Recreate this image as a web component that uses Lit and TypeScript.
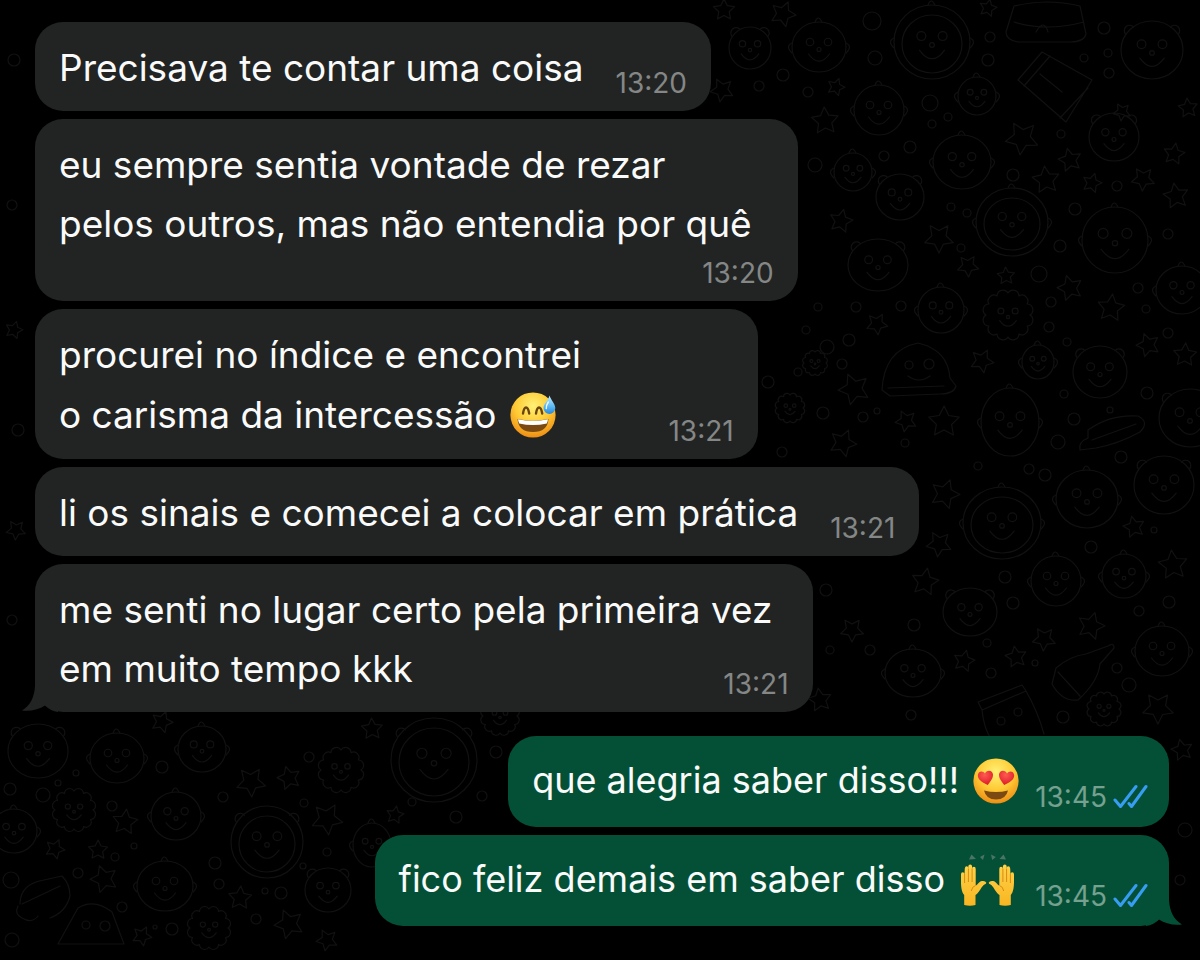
import { LitElement, html, svg, css, nothing } from "lit";
import { customElement, property } from "lit/decorators.js";
import { classMap } from "lit/directives/class-map.js";

type EmojiName = "sweat" | "love" | "hands";

interface Message {
  lines: string[];
  time: string;
  emoji?: EmojiName;
  sent?: boolean;
  tail?: boolean;
  below?: boolean;
  room?: "wide" | "tight";
}

const messages: Message[] = [
  { lines: ["Precisava te contar uma coisa"], time: "13:20" },
  {
    lines: ["eu sempre sentia vontade de rezar", "pelos outros, mas não entendia por quê"],
    time: "13:20",
    below: true,
  },
  {
    lines: ["procurei no índice e encontrei", "o carisma da intercessão"],
    time: "13:21",
    emoji: "sweat",
    room: "wide",
  },
  { lines: ["li os sinais e comecei a colocar em prática"], time: "13:21" },
  {
    lines: ["me senti no lugar certo pela primeira vez", "em muito tempo kkk"],
    time: "13:21",
    tail: true,
  },
  { lines: ["que alegria saber disso!!!"], time: "13:45", emoji: "love", sent: true, room: "tight" },
  {
    lines: ["fico feliz demais em saber disso"],
    time: "13:45",
    emoji: "hands",
    sent: true,
    tail: true,
    room: "tight",
  },
];

/* Doodles of the wallpaper: centre x, centre y, horizontal and vertical radius. */
const faces: number[][] = [
  [750, 48, 21, 21], [819, 47, 27, 25], [932, 42, 38, 37], [1152, 50, 31, 29],
  [879, 110, 25, 25], [977, 96, 19, 19], [1114, 137, 25, 24], [962, 162, 29, 27],
  [853, 172, 19, 19], [900, 197, 24, 23], [1012, 222, 36, 34], [1115, 240, 33, 33],
  [878, 265, 30, 26], [941, 310, 23, 23], [1038, 362, 16, 17], [1100, 372, 27, 26],
  [1010, 422, 29, 34], [1182, 290, 26, 24], [1190, 418, 31, 29], [1002, 523, 39, 36],
  [1087, 499, 31, 29], [1164, 485, 30, 29], [1056, 581, 25, 25], [1124, 576, 22, 22],
  [970, 612, 27, 24], [913, 673, 28, 24], [1162, 651, 27, 25], [38, 751, 30, 27],
  [117, 758, 27, 25], [202, 749, 24, 23], [434, 760, 43, 42], [14, 831, 23, 22],
  [176, 816, 25, 24], [267, 842, 36, 36], [372, 845, 19, 22], [165, 886, 28, 25],
  [328, 890, 23, 22],
];
const fluffy: number[][] = [
  [1008, 315, 22], [1104, 709, 15], [341, 770, 20], [74, 810, 19], [209, 928, 19],
  [500, 716, 17], [815, 363, 11], [790, 408, 13],
];
const stars: number[][] = [
  [724, 10, 11], [783, 14, 13], [722, 90, 12], [825, 121, 14], [836, 87, 9], [1022, 138, 17],
  [1046, 180, 14], [1092, 183, 10], [1143, 179, 12], [1176, 196, 13], [841, 221, 12],
  [939, 238, 15], [1070, 160, 12], [1174, 154, 11], [968, 266, 11], [1070, 288, 13],
  [1111, 308, 14], [877, 324, 11], [1148, 345, 12], [1185, 355, 12], [982, 361, 12],
  [854, 389, 16], [944, 422, 16], [843, 443, 14], [906, 421, 11], [1006, 276, 9],
  [945, 494, 15], [939, 544, 13], [1173, 565, 15], [1091, 626, 14], [1044, 639, 12],
  [1016, 657, 11], [964, 661, 11], [1158, 708, 16], [1134, 527, 11], [925, 582, 14],
  [251, 782, 15], [289, 778, 12], [125, 822, 13], [327, 819, 16], [104, 879, 14],
  [240, 898, 12], [142, 936, 10], [289, 924, 15], [98, 850, 10], [55, 849, 10],
  [327, 940, 11], [372, 729, 11], [162, 722, 11], [1122, 112, 9], [1188, 108, 10],
  [14, 330, 9], [16, 530, 10], [820, 700, 12], [988, 8, 9], [852, 630, 12],
  [1182, 750, 11], [395, 815, 9],
];
const dots: number[][] = [
  [872, 21, 9], [875, 58, 7], [990, 37, 5], [988, 60, 6], [930, 103, 8], [932, 124, 4],
  [948, 117, 4], [910, 147, 6], [884, 156, 5], [815, 165, 7], [1104, 28, 6], [1108, 53, 4],
  [1109, 73, 5], [1084, 58, 4], [1061, 134, 4], [1013, 175, 6], [1117, 186, 5], [951, 207, 4],
  [967, 213, 4], [1075, 209, 6], [759, 86, 5], [783, 75, 6], [808, 92, 5], [1168, 234, 5],
  [1039, 274, 8], [1060, 246, 6], [961, 248, 4], [1051, 302, 5], [1146, 309, 4], [1049, 327, 5],
  [1138, 288, 5], [1168, 333, 5], [901, 306, 5], [856, 307, 5], [818, 307, 4], [1067, 342, 4],
  [823, 413, 6], [863, 417, 5], [877, 411, 3], [905, 443, 4], [1074, 419, 6], [1058, 442, 7],
  [1121, 457, 6], [1064, 394, 4], [1110, 410, 3], [1147, 393, 6], [978, 466, 4], [1029, 469, 5],
  [1045, 475, 6], [1091, 547, 6], [1154, 530, 3], [1005, 577, 6], [1169, 602, 6], [1139, 611, 5],
  [1013, 603, 6], [914, 625, 6], [991, 673, 5], [911, 715, 5], [1117, 668, 5], [1129, 685, 7],
  [1063, 717, 6], [1035, 663, 3], [987, 643, 4], [162, 767, 6], [76, 773, 3], [58, 783, 3],
  [10, 789, 6], [43, 795, 7], [112, 806, 5], [309, 757, 5], [304, 803, 4], [223, 797, 5],
  [134, 846, 3], [115, 857, 4], [78, 873, 5], [11, 880, 8], [215, 863, 6], [219, 884, 5],
  [281, 893, 6], [265, 891, 3], [256, 919, 5], [172, 929, 6], [155, 927, 2], [122, 907, 5],
  [12, 940, 7], [327, 852, 4], [303, 866, 3], [14, 60, 6], [12, 205, 5], [18, 430, 6],
  [12, 620, 5], [806, 330, 4], [768, 382, 6], [842, 364, 5], [849, 340, 6], [827, 347, 7],
  [798, 372, 4], [782, 452, 5], [826, 590, 6], [870, 650, 5], [830, 650, 4], [1185, 830, 7],
  [1180, 880, 5], [412, 802, 4], [482, 796, 5], [496, 752, 6], [456, 817, 6],
];

function starPath(x: number, y: number, r: number, turn: number): string {
  const points: string[] = [];
  for (let i = 0; i < 10; i++) {
    const a = (Math.PI * i) / 5 + turn;
    const d = i % 2 ? r * 0.5 : r;
    points.push(`${(x + d * Math.sin(a)).toFixed(1)} ${(y - d * Math.cos(a)).toFixed(1)}`);
  }
  return `M${points.join("L")}Z`;
}

function fluffyPath(x: number, y: number, r: number): string {
  const n = 12;
  let d = "";
  for (let i = 0; i <= n; i++) {
    const a = (2 * Math.PI * i) / n;
    const px = (x + r * Math.cos(a)).toFixed(1);
    const py = (y + r * Math.sin(a)).toFixed(1);
    d += i ? `A${r * 0.27} ${r * 0.27} 0 0 1 ${px} ${py}` : `M${px} ${py}`;
  }
  return d + "Z";
}

const smile = (x: number, y: number, r: number) => svg`
  <circle cx=${x - r * 0.36} cy=${y - r * 0.2} r=${r * 0.15}></circle>
  <circle cx=${x + r * 0.36} cy=${y - r * 0.2} r=${r * 0.15}></circle>
  <circle cx=${x} cy=${y + r * 0.1} r=${r * 0.08}></circle>
  <path d="M${x - r * 0.42} ${y + r * 0.28}Q${x} ${y + r * 0.85} ${x + r * 0.42} ${y + r * 0.28}"></path>`;

@customElement("chat-wallpaper")
class ChatWallpaper extends LitElement {
  static styles = css`
    :host {
      display: block;
      overflow: hidden;
    }
    .art {
      display: block;
      width: 100%;
      height: 100%;
      fill: none;
      stroke: #101110;
      stroke-width: 1.2;
      stroke-linejoin: round;
      stroke-linecap: round;
    }
  `;

  render() {
    return html`<svg class="art" viewBox="0 0 1200 960" preserveAspectRatio="xMidYMid slice" aria-hidden="true">
      ${faces.map(
        ([x, y, rx, ry], i) => svg`
        <ellipse cx=${x} cy=${y} rx=${rx} ry=${ry}></ellipse>
        ${rx > 35 ? svg`<ellipse cx=${x} cy=${y + 2} rx=${rx - 8} ry=${ry - 8}></ellipse>` : nothing}
        ${i % 3 === 0
          ? svg`<path d="M${x - rx * 0.85} ${y - ry * 0.55}a5 5 0 1 1 8 -7M${x + rx * 0.85} ${y - ry * 0.55}a5 5 0 1 0 -8 -7"></path>`
          : svg`<path d="M${x - rx} ${y - 4}q-7 3 0 10M${x + rx} ${y - 4}q7 3 0 10M${x - 4} ${y - ry}q3 -8 7 0"></path>`}
        ${smile(x, y, Math.min(rx, ry) * (rx > 35 ? 0.8 : 1))}`
      )}
      ${fluffy.map(([x, y, r]) => svg`<path d=${fluffyPath(x, y, r)}></path>${smile(x, y, r * 0.9)}`)}
      ${stars.map(([x, y, r], i) => svg`<path d=${starPath(x, y, r, i * 0.4)}></path>`)}
      ${dots.map(([x, y, r]) => svg`<circle cx=${x} cy=${y} r=${r}></circle>`)}
      <path d="M1014 6Q1046 -2 1080 6L1086 34Q1084 42 1070 42H1018Q1006 40 1006 32ZM1014 22Q1046 32 1084 22M1036 32q8 -14 12 0"></path>
      <path d="M1042 52L1092 80L1066 122L1018 80ZM1042 52L1018 80M1050 56L1024 86M1088 88L1060 118M1040 74L1062 92"></path>
      <path d="M882 390Q884 350 918 343Q948 350 950 378L956 386Q954 394 940 394L890 396ZM888 388L944 386"></path>
      <circle cx="909" cy="365" r="4"></circle><circle cx="929" cy="364" r="5"></circle>
      <path d="M908 376Q919 384 930 376"></path>
      <path d="M1088 430Q1110 414 1138 416Q1150 422 1140 432Q1118 444 1096 448L1080 450Q1078 442 1088 438ZM1092 440L1136 424"></path>
      <path d="M1056 668Q1070 656 1086 654L1108 646Q1114 642 1114 648L1100 664Q1098 682 1078 700Q1062 702 1052 684ZM1058 672L1080 696"></path>
      <path d="M978 702L1022 685L1026 691L982 710ZM982 710Q984 730 992 740M1026 691Q1038 712 1044 734"></path>
      <circle cx="1001" cy="721" r="4"></circle><circle cx="1018" cy="712" r="4"></circle>
      <path d="M20 904Q20 884 44 880L62 876Q70 884 70 896Q66 912 50 918M22 904L60 886M18 906q-4 8 4 12q10 6 16 -2"></path>
      <path d="M58 944L78 908Q94 898 112 912L124 944Z"></path>
      <circle cx="86" cy="925" r="4"></circle><circle cx="105" cy="926" r="5"></circle>
    </svg>`;
  }
}

const sweatEmoji = html`<svg class="emoji" viewBox="0 0 46 46" role="img" aria-label="😅">
  <defs>
    <radialGradient id="skin" cx="0.5" cy="0.3" r="0.7">
      <stop offset="0" stop-color="#fff176"></stop>
      <stop offset="0.55" stop-color="#fecb35"></stop>
      <stop offset="1" stop-color="#ee8d14"></stop>
    </radialGradient>
    <linearGradient id="drop" x1="0" y1="0" x2="0" y2="1">
      <stop offset="0" stop-color="#c5ecff"></stop>
      <stop offset="0.6" stop-color="#5ab8f2"></stop>
      <stop offset="1" stop-color="#2a86dc"></stop>
    </linearGradient>
  </defs>
  <circle cx="23" cy="23" r="22.6" fill="url(#skin)"></circle>
  <path d="M13 21.5Q14 15.500 16 15.500Q18.200 15.500 19.200 21.500M26 21.500Q27 15.500 29 15.500Q31.200 15.500 32.200 21.500" fill="none" stroke="#6b4510" stroke-width="2.400" stroke-linecap="round"></path>
  <path d="M7.500 27Q23 30.500 38.500 27Q37.500 40 23 40Q8.500 40 7.500 27Z" fill="#7a4a12"></path>
  <path d="M8 27.200Q23 30.500 38 27.200Q37.800 29.500 36.800 31.500Q23 34.500 9.200 31.500Q8.200 29.500 8 27.200Z" fill="#fff"></path>
  <path d="M39.500 3.500C38.500 8 33.500 12 33.500 16A5.900 5.900 0 0 0 45.300 16C45.300 12 41 8 39.500 3.500Z" fill="url(#drop)"></path>
  <path d="M38.300 10Q36 13.500 36.300 16.500" fill="none" stroke="#e8f8ff" stroke-width="1.400" stroke-linecap="round"></path>
</svg>`;

const loveEmoji = html`<svg class="emoji" viewBox="0 0 46 46" role="img" aria-label="😍">
  <defs>
    <radialGradient id="skin" cx="0.5" cy="0.3" r="0.7">
      <stop offset="0" stop-color="#fff176"></stop>
      <stop offset="0.55" stop-color="#fecb35"></stop>
      <stop offset="1" stop-color="#ee8d14"></stop>
    </radialGradient>
    <radialGradient id="heart" cx="0.45" cy="0.3" r="0.8">
      <stop offset="0" stop-color="#ff5a52"></stop>
      <stop offset="1" stop-color="#d81322"></stop>
    </radialGradient>
  </defs>
  <circle cx="23" cy="23" r="22.600" fill="url(#skin)"></circle>
  <path d="M14.800 27C9 24.500 5 21.500 4.800 17.800C4.800 13 10 12.200 12 15.600C13 11.600 19.800 11.400 20 16.600C20.100 20.600 17.200 24 14.800 27Z" fill="url(#heart)"></path>
  <path d="M31.200 27C37 24.500 41 21.500 41.200 17.800C41.200 13 36 12.200 34 15.600C33 11.600 26.200 11.400 26 16.600C25.900 20.600 28.800 24 31.200 27Z" fill="url(#heart)"></path>
  <path d="M11 32.500Q23 35.500 35 32.500Q33 41.500 23 41.500Q13 41.500 11 32.500Z" fill="#7a4a12"></path>
</svg>`;

const handsEmoji = html`<svg class="emoji emoji-hands" viewBox="0 0 56 52" role="img" aria-label="🙌">
  <defs>
    <linearGradient id="palm" x1="0" y1="0" x2="0" y2="1">
      <stop offset="0" stop-color="#ffd34a"></stop>
      <stop offset="1" stop-color="#f9b521"></stop>
    </linearGradient>
    <g id="hand">
      <path d="M5.200 51V41C2.600 38 2 33 2 27V20.500Q2 18.200 3.700 18.200Q5.400 18.200 5.500 20.500L5.800 14.500Q6 12.200 7.700 12.200Q9.300 12.200 9.300 14.500V12.600Q9.400 10.400 11.200 10.400Q13 10.400 13.100 12.600V14.800Q13.200 12.800 14.900 12.800Q16.700 12.800 16.700 15V31.500C18.500 31 20 27.500 23 27Q26.500 26.600 27.300 28.800Q27.300 30 25.500 30.500C22.500 32 20.500 38.500 16.500 41V51Q11 52.300 5.200 51Z" fill="url(#palm)"></path>
      <path d="M5.600 20V29M9.400 14.500V28M13.100 14.500V28M16.500 31.500Q13 32.500 12.300 37" fill="none" stroke="#d98a12" stroke-width="1"></path>
    </g>
  </defs>
  <use href="#hand"></use>
  <use href="#hand" transform="translate(57 0) scale(-1 1)"></use>
  <g fill="#4a7564">
    <path d="M12.500 0.500L17 5L10 5.500ZM21 3L25.500 0.500L24 6ZM32 0.500L36.800 3L33.200 6ZM44.500 0.500L47 5.500L40.500 5Z"></path>
  </g>
</svg>`;

const emojis = { sweat: sweatEmoji, love: loveEmoji, hands: handsEmoji };

@customElement("chat-bubble")
class ChatBubble extends LitElement {
  @property({ attribute: false }) message!: Message;

  static styles = css`
    :host {
      display: block;
      max-width: 100%;
    }
    .bubble {
      position: relative;
      display: grid;
      grid-template-columns: auto auto;
      padding: 16px 24px 14px;
      border-radius: 28px;
      background: #212423;
      color: #fafafa;
      font-size: 37px;
      line-height: 59px;
    }
    .sent {
      padding: 14px 21px 16px 24px;
      background: #045036;
      font-size: 36px;
    }
    .line {
      grid-column: 1;
    }
    .line.full {
      grid-column: 1 / -1;
      padding-right: 16px;
    }
    .below .line.full {
      padding-right: 22px;
    }
    .with-emoji {
      display: flex;
      align-items: center;
      gap: 14px;
      line-height: 61px;
    }
    .emoji {
      display: block;
      flex: none;
      width: 46px;
      height: 46px;
    }
    .emoji-hands {
      width: 56px;
      height: 52px;
      margin-right: 4px;
    }
    .meta {
      grid-column: 2;
      align-self: end;
      justify-self: end;
      display: flex;
      align-items: center;
      gap: 6px;
      margin-left: 32px;
      color: #858786;
      font-size: 28px;
      line-height: 28px;
    }
    .wide .meta {
      margin-left: 112px;
    }
    .tight .meta {
      margin-left: 16px;
    }
    .below .meta {
      padding-top: 6px;
    }
    .sent .meta {
      color: #76a08f;
    }
    .ticks {
      display: block;
      width: 35px;
      height: 26px;
      fill: none;
      stroke: #379df3;
      stroke-width: 3;
      stroke-linecap: round;
      stroke-linejoin: round;
    }
    .tail {
      position: absolute;
      bottom: 0;
      left: -13px;
      width: 36px;
      height: 30px;
      fill: #212423;
    }
    .sent .tail {
      left: auto;
      right: -13px;
      fill: #045036;
      transform: scaleX(-1);
    }
  `;

  render() {
    const m = this.message;
    const last = m.lines.length - 1;
    const classes = {
      bubble: true,
      sent: !!m.sent,
      below: !!m.below,
      wide: m.room === "wide",
      tight: m.room === "tight",
    };
    return html`<div class=${classMap(classes)}>
      ${m.lines.map((text, i) => {
        const emoji = i === last && m.emoji ? emojis[m.emoji] : nothing;
        const full = i < last || !!m.below;
        return html`<div class=${classMap({ line: true, full, "with-emoji": emoji !== nothing })}>
          <span>${text}</span>${emoji}
        </div>`;
      })}
      <div class="meta">
        <time>${m.time}</time>
        ${m.sent
          ? html`<svg class="ticks" viewBox="0 0 35 26" role="img" aria-label="Lida">
              <path d="M2 16L7.500 22.500L23 2.500M16 19.500L18.500 22.500L33 2.500"></path>
            </svg>`
          : nothing}
      </div>
      ${m.tail
        ? html`<svg class="tail" viewBox="0 0 36 30" aria-hidden="true">
            <path d="M13 0V4C12.500 15 8 24 0 28.500C9 29.500 17 27.500 23 23.500C27 27 31 29.500 36 30V0Z"></path>
          </svg>`
        : nothing}
    </div>`;
  }
}

@customElement("app-root")
class AppRoot extends LitElement {
  static styles = css`
    :host {
      display: grid;
      min-height: 100vh;
      background: #000;
      font-family: Inter, "Liberation Sans", sans-serif;
    }
    .wallpaper,
    .chat {
      grid-area: 1 / 1;
    }
    .wallpaper {
      min-height: 0;
      contain: size;
    }
    .chat {
      position: relative;
      display: flex;
      flex-direction: column;
      gap: 24px;
      padding: 22px 31px 22px 35px;
    }
    .group {
      display: flex;
      flex-direction: column;
      align-items: flex-start;
      gap: 8px;
    }
    .mine {
      align-items: flex-end;
    }
  `;

  render() {
    return html`
      <chat-wallpaper class="wallpaper"></chat-wallpaper>
      <main class="chat">
        <section class="group">
          ${messages.filter((m) => !m.sent).map((m) => html`<chat-bubble .message=${m}></chat-bubble>`)}
        </section>
        <section class="group mine">
          ${messages.filter((m) => m.sent).map((m) => html`<chat-bubble .message=${m}></chat-bubble>`)}
        </section>
      </main>
    `;
  }
}
